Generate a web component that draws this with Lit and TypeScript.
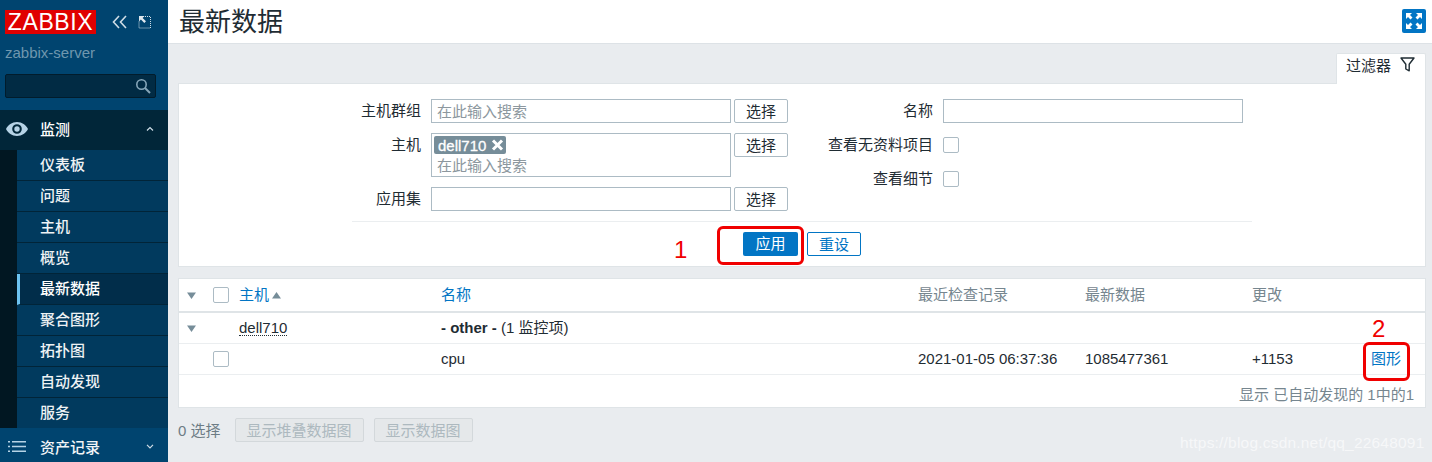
import { LitElement, html, css } from "lit";
import { customElement } from "lit/decorators.js";

@customElement("app-root")
export class AppRoot extends LitElement {
  static styles = css`
    :host { display: block; width: 1432px; height: 462px; overflow: hidden; position: relative; font-family: "Liberation Sans", "Noto Sans CJK SC", sans-serif; font-size: 15px; color: #1f2c33; background: #e9ecef; }
    * { box-sizing: border-box; }
    .page { display: flex; height: 462px; }
    /* sidebar */
    .side { width: 168px; flex: none; background: #00446f; display: flex; flex-direction: column; color: #f2f5f7; height: 462px; overflow: hidden; font-weight: 500; }
    .brand { height: 45px; display: flex; align-items: flex-start; padding: 10px 0 0 5px; }
    .logo { width: 91px; height: 24px; background: #e00000; color: #fff; font-size: 23px; font-weight: 400; line-height: 24px; text-align: center; letter-spacing: 0.6px; }
    .ctl { display: flex; gap: 11px; margin: 5px 0 0 16px; }
    .server { height: 18px; padding-left: 5px; line-height: 15px; color: #6f97ae; font-size: 15px; }
    .search { margin: 11px 0 0 5px; width: 151px; height: 24px; background: #012b44; border: 1px solid #011c2c; border-radius: 2px; display: flex; justify-content: flex-end; align-items: center; padding-right: 4px; }
    .mon { margin-top: 12px; height: 40px; background: #012639; display: flex; align-items: center; padding: 0 0 3px 6px; color: #fff; }
    .mon .t { margin-left: 12px; }
    .caret { margin-left: auto; margin-right: 14px; display: flex; }
    .subwrap { display: flex; flex: 1; min-height: 0; }
    .strip { width: 17px; background: #011722; flex: none; }
    .sub { flex: 1; background: #013a5e; display: flex; flex-direction: column; }
    .item { height: 31px; flex: none; border-bottom: 1px solid #012438; line-height: 29px; padding-left: 23px; color: #eef2f4; }
    .item.on { background: #012d4a; border-left: 3px solid #6cc3f1; padding-left: 20px; color: #fff; }
    .item:last-child { border-bottom: 0; }
    .foot { height: 34px; flex: none; background: #00446f; display: flex; align-items: center; padding: 3px 0 0 8px; color: #f2f5f7; }
    .foot .t { margin-left: 14px; }
    /* main */
    .main { flex: 1; display: flex; flex-direction: column; min-width: 0; }
    .head { height: 44px; flex: none; background: #fff; border-bottom: 1px solid #dde2e6; display: flex; align-items: flex-start; padding: 0 6px 0 11px; justify-content: space-between; }
    h1 { margin: 0; font-size: 26px; font-weight: 400; line-height: 44px; color: #1f2c33; }
    .expand { margin-top: 9px; width: 24px; height: 24px; background: #0275c4; border-radius: 2px; display: flex; align-items: center; justify-content: center; }
    .content { padding: 9px 6px 0 10px; flex: 1; display: flex; flex-direction: column; }
    .tabrow { display: flex; justify-content: flex-end; height: 31px; position: relative; z-index: 1; }
    .tab { width: 90px; height: 31px; background: #fff; border: 1px solid #dfe4e7; border-bottom: 0; border-radius: 2px 2px 0 0; display: flex; align-items: center; padding: 0 0 9px 9px; gap: 9px; }
    .filter { height: 184px; margin-top: -1px; background: #fff; border: 1px solid #dfe4e7; display: flex; flex-direction: column; align-items: center; padding-top: 15px; }
    .form { width: 900px; }
    .cols { display: flex; height: 123px; }
    .left { display: grid; grid-template-columns: 69px 300px 54px; column-gap: 10px; grid-template-rows: 24px 44px 24px; row-gap: 10px; width: 436px; }
    .left .sel { margin-left: -7px; }
    .right { display: grid; grid-template-columns: 145px auto; column-gap: 10px; grid-template-rows: 24px 24px 24px; row-gap: 10px; align-content: start; }
    .lab { text-align: right; line-height: 24px; white-space: nowrap; color: #1f2c33; justify-self: end; }
    .inp { width: 300px; height: 24px; border: 1px solid #acbbc4; background: #fff; padding-left: 5px; line-height: 24px; color: #8c979e; }
    .inp.multi { height: 44px; padding: 2px 0 0 2px; line-height: 21px; }
    .ph { padding-left: 3px; display: block; margin-top: -2px; }
    .tag { display: inline-flex; align-items: center; gap: 5px; height: 18px; background: #768d99; color: #fff; padding: 0 2px 0 4px; border-radius: 2px; -webkit-text-stroke: 0.3px #fff; vertical-align: top; }
    .sel { width: 54px; height: 24px; border: 1px solid #acbbc4; border-radius: 2px; background: #fff; text-align: center; line-height: 24px; color: #1f2c33; }
    .chk { width: 16px; height: 16px; border: 1px solid #acbbc4; border-radius: 2px; background: #fff; display: block; }
    .right .chk { margin-top: 4px; }
    .sep { border-top: 1px solid #ebeef0; height: 1px; margin-top: -1px; }
    .actions { display: flex; gap: 9px; padding: 10px 0 0 391px; }
    .btn { width: 55px; height: 24px; border-radius: 2px; background: #0275c4; color: #fff; text-align: center; line-height: 24px; }
    .btn.alt { width: 54px; background: #fff; color: #0275c4; border: 1px solid #0275c4; line-height: 23px; }
    .table { margin-top: 11px; height: 130px; background: #fff; border: 1px solid #dfe4e7; display: flex; flex-direction: column; }
    .row { display: grid; grid-template-columns: 34px 26px 202px 477px 167px 167px 119px 1fr; align-items: center; border-bottom: 1px solid #ebeef0; height: 31px; white-space: nowrap; }
    .row.h { height: 34px; border-bottom: 2px solid #dfe4e7; color: #76868f; }
    .u1 { margin-bottom: 2px; }
    .u2 { margin-bottom: 4px; }
    .link { color: #0275c4; }
    .sorted { display: flex; align-items: center; gap: 3px; }
    .tri { display: block; margin-left: 8px; }
    .dotted { border-bottom: 1px dotted #1f2c33; line-height: 15px; justify-self: start; }
    .summary { flex: 1; display: flex; align-items: center; justify-content: flex-end; padding: 5px 11px 0 0; color: #76868f; }
    .bottom { display: flex; align-items: center; margin-top: 10px; height: 24px; color: #6d7c85; }
    .bottom .cnt { margin-bottom: 2px; }
    .dis { height: 24px; border: 1px solid #d3d8db; border-radius: 2px; background: #e5e8ea; color: #adb9bf; padding: 0 11px; line-height: 23px; }
    .dis.a { margin-left: 14px; }
    .dis.b { margin-left: 10px; }
    /* annotations lying over the page */
    .mark { position: absolute; border: 3px solid #f00000; border-radius: 6px; }
    .m1 { left: 717px; top: 226px; width: 87px; height: 39px; }
    .m2 { left: 1363px; top: 342px; width: 47px; height: 39px; }
    .num { position: absolute; color: #f00000; font-size: 24px; line-height: 24px; }
    .n1 { left: 674px; top: 238px; }
    .n2 { left: 1372px; top: 317px; }
    .wm { position: absolute; left: 1180px; top: 433px; color: rgba(255,255,255,.62); font-size: 15.5px; line-height: 20px; letter-spacing: 0.2px; }
  `;

  private tri() {
    return html`<svg class="tri" width="9" height="7" viewBox="0 0 9 7"><path d="M0 .5H9L4.5 7Z" fill="#768d99"/></svg>`;
  }

  render() {
    const items = ["仪表板", "问题", "主机", "概览", "最新数据", "聚合图形", "拓扑图", "自动发现", "服务"];
    return html`
      <div class="page">
        <aside class="side">
          <div class="brand">
            <div class="logo">ZABBIX</div>
            <div class="ctl">
              <svg width="15" height="14" viewBox="0 0 15 14" fill="none" stroke="#cfdde6" stroke-width="1.6"><path d="M7 1 1.5 7 7 13M14 1 8.5 7 14 13"/></svg>
              <svg width="13" height="14" viewBox="0 0 13 14" fill="none"><path d="M5 1.5H12.5V13H1V6" stroke="#cfdde6" stroke-dasharray="1 1"/><path d="M1 1H6.5L4.6 2.9 8 6.3 6.3 8 2.9 4.6 1 6.5Z" fill="#dfe8ee"/></svg>
            </div>
          </div>
          <div class="server">zabbix-server</div>
          <div class="search">
            <svg width="16" height="16" viewBox="0 0 16 16" fill="none" stroke="#86a6b9" stroke-width="1.6"><circle cx="6.5" cy="6.5" r="4.7"/><path d="M10 10 15 15" stroke-width="2"/></svg>
          </div>
          <div class="mon">
            <svg width="22" height="14" viewBox="0 0 22 14"><path fill-rule="evenodd" fill="#b6d3e6" d="M11 0C6 0 2 3 0 7c2 4 6 7 11 7s9-3 11-7c-2-4-6-7-11-7Zm0 2.2a4.8 4.8 0 1 1 0 9.6 4.8 4.8 0 0 1 0-9.6Z"/><circle cx="11" cy="7" r="2.7" fill="#b6d3e6"/></svg>
            <span class="t">监测</span>
            <span class="caret"><svg width="8" height="5" viewBox="0 0 8 5" fill="none" stroke="#cfdde6" stroke-width="1.2"><path d="M1 4.5 4 1.5 7 4.5"/></svg></span>
          </div>
          <div class="subwrap">
            <div class="strip"></div>
            <div class="sub">
              ${items.map((t) => html`<div class="item ${t === "最新数据" ? "on" : ""}">${t}</div>`)}
            </div>
          </div>
          <div class="foot">
            <svg width="18" height="11" viewBox="0 0 18 11" fill="#b6d3e6"><path d="M0 0h2v1.6H0zM4 0h14v1.6H4zM0 4.7h2v1.6H0zM4 4.7h14v1.6H4zM0 9.4h2V11H0zM4 9.4h14V11H4z"/></svg>
            <span class="t">资产记录</span>
            <span class="caret"><svg width="8" height="5" viewBox="0 0 8 5" fill="none" stroke="#cfdde6" stroke-width="1.2"><path d="M1 .8 4 3.8 7 .8"/></svg></span>
          </div>
        </aside>
        <main class="main">
          <header class="head">
            <h1>最新数据</h1>
            <div class="expand">
              <svg width="18" height="18" viewBox="0 0 18 18" fill="#fff"><path d="M1 1H7L5 3 7.5 5.5 5.5 7.5 3 5 1 7ZM17 1V7L15 5 12.5 7.5 10.5 5.5 13 3 11 1ZM1 17V11L3 13 5.5 10.5 7.5 12.5 5 15 7 17ZM17 17H11L13 15 10.5 12.5 12.5 10.5 15 13 17 11Z"/></svg>
            </div>
          </header>
          <div class="content">
            <div class="tabrow">
              <div class="tab">
                <span>过滤器</span>
                <svg width="15" height="15" viewBox="0 0 15 15" fill="none" stroke="#1f2c33" stroke-width="1.4"><path d="M1 1H14L9.2 7.2V13.8L5.8 12V7.2Z" stroke-linejoin="round"/></svg>
              </div>
            </div>
            <section class="filter">
              <div class="form">
                <div class="cols">
                  <div class="left">
                    <div class="lab">主机群组</div><div class="inp">在此输入搜索</div><div class="sel">选择</div>
                    <div class="lab">主机</div>
                    <div class="inp multi"><span class="tag">dell710 <svg width="13" height="12" viewBox="0 0 12 12" stroke="#fff" stroke-width="3"><path d="M1.5 1.5 10.5 10.5M10.5 1.5 1.5 10.5"/></svg></span><span class="ph">在此输入搜索</span></div>
                    <div class="sel">选择</div>
                    <div class="lab">应用集</div><div class="inp"></div><div class="sel">选择</div>
                  </div>
                  <div class="right">
                    <div class="lab">名称</div><div class="inp"></div>
                    <div class="lab">查看无资料项目</div><div><span class="chk"></span></div>
                    <div class="lab">查看细节</div><div><span class="chk"></span></div>
                  </div>
                </div>
                <div class="sep"></div>
                <div class="actions">
                  <div class="btn">应用</div>
                  <div class="btn alt">重设</div>
                </div>
              </div>
            </section>
            <section class="table">
              <div class="row h">
                ${this.tri()}<span class="chk"></span>
                <span class="sorted"><span class="link u2">主机</span><svg width="9" height="7" viewBox="0 0 9 7"><path d="M0 6.5 4.5 0 9 6.5Z" fill="#768d99"/></svg></span>
                <span class="link u2">名称</span><span class="u2">最近检查记录</span><span class="u2">最新数据</span><span class="u2">更改</span><span></span>
              </div>
              <div class="row">
                ${this.tri()}<span></span><span class="dotted">dell710</span>
                <span class="u2"><b>- other -</b> (1 监控项)</span><span></span><span></span><span></span><span></span>
              </div>
              <div class="row">
                <span></span><span class="chk"></span><span></span>
                <span class="u1">cpu</span><span class="u1">2021-01-05 06:37:36</span><span class="u1">1085477361</span><span class="u1">+1153</span><span class="link u2">图形</span>
              </div>
              <div class="summary">显示 已自动发现的 1中的1</div>
            </section>
            <div class="bottom">
              <span class="cnt">0 选择</span>
              <span class="dis a">显示堆叠数据图</span>
              <span class="dis b">显示数据图</span>
            </div>
          </div>
        </main>
      </div>
      <div class="mark m1"></div>
      <div class="mark m2"></div>
      <div class="num n1">1</div>
      <div class="num n2">2</div>
      <div class="wm">https://blog.csdn.net/qq_22648091</div>
    `;
  }
}
